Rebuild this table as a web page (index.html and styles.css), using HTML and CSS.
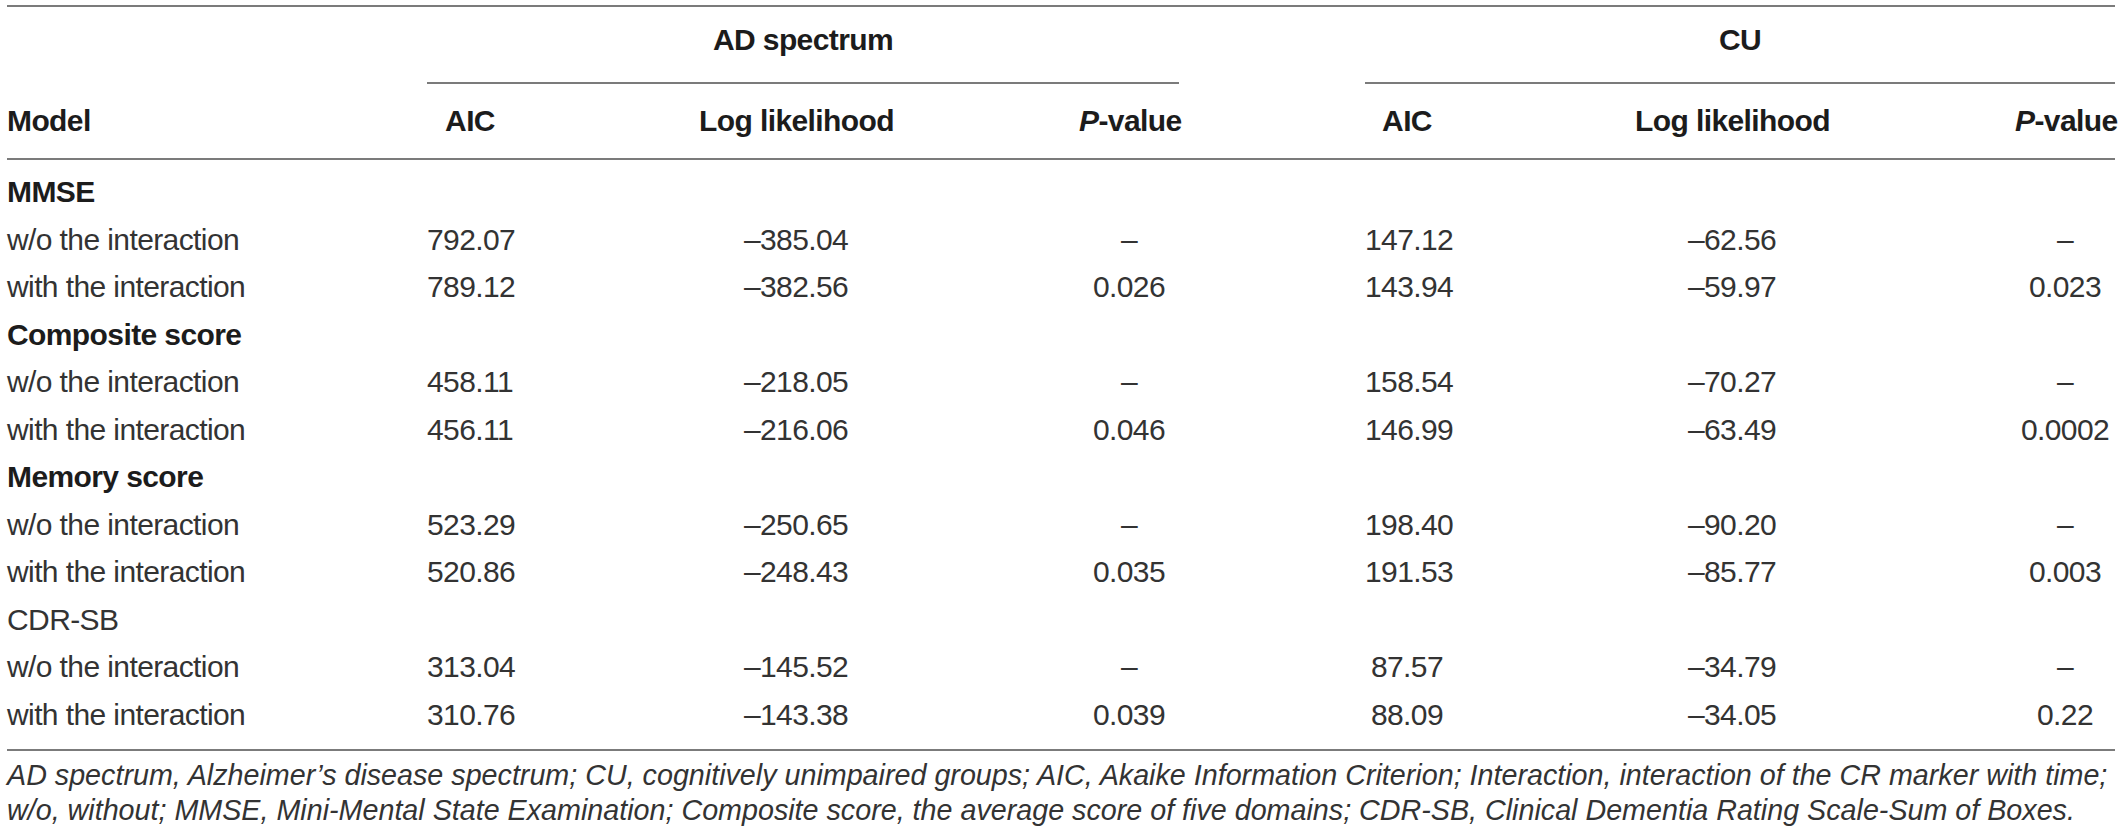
FILE: index.html
```html
<!DOCTYPE html>
<html lang="en">
<head>
<meta charset="utf-8">
<title>Model comparison</title>
<link rel="stylesheet" href="styles.css">
</head>
<body>
<div class="table">
  <div class="thead">
    <div class="row group-row">
      <div class="cell"></div>
      <div class="cell group span-ad">AD spectrum</div>
      <div class="cell group span-cu">CU</div>
    </div>
    <div class="row col-row">
      <div class="cell left">Model</div>
      <div class="cell">AIC</div>
      <div class="cell">Log likelihood</div>
      <div class="cell"><i>P</i>-value</div>
      <div class="cell">AIC</div>
      <div class="cell">Log likelihood</div>
      <div class="cell"><i>P</i>-value</div>
    </div>
  </div>
  <div class="tbody">
    <div class="row"><div class="cell left strong">MMSE</div></div>
    <div class="row"><div class="cell left">w/o the interaction</div><div class="cell">792.07</div><div class="cell">–385.04</div><div class="cell">–</div><div class="cell">147.12</div><div class="cell">–62.56</div><div class="cell">–</div></div>
    <div class="row"><div class="cell left">with the interaction</div><div class="cell">789.12</div><div class="cell">–382.56</div><div class="cell">0.026</div><div class="cell">143.94</div><div class="cell">–59.97</div><div class="cell">0.023</div></div>
    <div class="row"><div class="cell left strong">Composite score</div></div>
    <div class="row"><div class="cell left">w/o the interaction</div><div class="cell">458.11</div><div class="cell">–218.05</div><div class="cell">–</div><div class="cell">158.54</div><div class="cell">–70.27</div><div class="cell">–</div></div>
    <div class="row"><div class="cell left">with the interaction</div><div class="cell">456.11</div><div class="cell">–216.06</div><div class="cell">0.046</div><div class="cell">146.99</div><div class="cell">–63.49</div><div class="cell">0.0002</div></div>
    <div class="row"><div class="cell left strong">Memory score</div></div>
    <div class="row"><div class="cell left">w/o the interaction</div><div class="cell">523.29</div><div class="cell">–250.65</div><div class="cell">–</div><div class="cell">198.40</div><div class="cell">–90.20</div><div class="cell">–</div></div>
    <div class="row"><div class="cell left">with the interaction</div><div class="cell">520.86</div><div class="cell">–248.43</div><div class="cell">0.035</div><div class="cell">191.53</div><div class="cell">–85.77</div><div class="cell">0.003</div></div>
    <div class="row"><div class="cell left">CDR-SB</div></div>
    <div class="row"><div class="cell left">w/o the interaction</div><div class="cell">313.04</div><div class="cell">–145.52</div><div class="cell">–</div><div class="cell">87.57</div><div class="cell">–34.79</div><div class="cell">–</div></div>
    <div class="row"><div class="cell left">with the interaction</div><div class="cell">310.76</div><div class="cell">–143.38</div><div class="cell">0.039</div><div class="cell">88.09</div><div class="cell">–34.05</div><div class="cell">0.22</div></div>
  </div>
  <p class="foot">AD spectrum, Alzheimer’s disease spectrum; CU, cognitively unimpaired groups; AIC, Akaike Information Criterion; Interaction, interaction of the CR marker with time;<br>w/o, without; MMSE, Mini-Mental State Examination; Composite score, the average score of five domains; CDR-SB, Clinical Dementia Rating Scale-Sum of Boxes.</p>
</div>
</body>
</html>
```

FILE: styles.css
```css
html, body {
  margin: 0;
  padding: 0;
  background: #ffffff;
}

body {
  font-family: "Liberation Sans", Arial, Helvetica, sans-serif;
  color: #333333;
}

.table {
  margin: 5px 5px 0 7px;
  width: 2108px;
  border-top: 2px solid #7b7b7b;
}

.row {
  display: grid;
  grid-template-columns: 234px 86px 194px 100px 84px 194px 100px;
  column-gap: 186px;
  font-size: 30px;
  letter-spacing: -0.6px;
}

.cell {
  text-align: center;
  white-space: nowrap;
}

.cell.left {
  text-align: left;
}

.thead {
  border-bottom: 2px solid #7b7b7b;
  font-weight: bold;
  color: #1c1c1c;
}

.group-row .cell {
  line-height: 30px;
  padding: 18px 0 27px;
}

.group {
  border-bottom: 2px solid #7b7b7b;
}

.span-ad {
  grid-column: 2 / 5;
}

.span-cu {
  grid-column: 5 / 8;
}

.col-row .cell {
  line-height: 30px;
  padding: 22px 0;
}

.tbody {
  padding: 8px 0 11px;
  border-bottom: 2px solid #7b7b7b;
}

.tbody .row {
  line-height: 47.5px;
}

.strong {
  font-weight: bold;
  color: #1c1c1c;
}

.foot {
  margin: 0;
  padding-top: 7px;
  font-style: italic;
  font-size: 28.7px;
  line-height: 35px;
  white-space: nowrap;
  color: #333333;
}
```
